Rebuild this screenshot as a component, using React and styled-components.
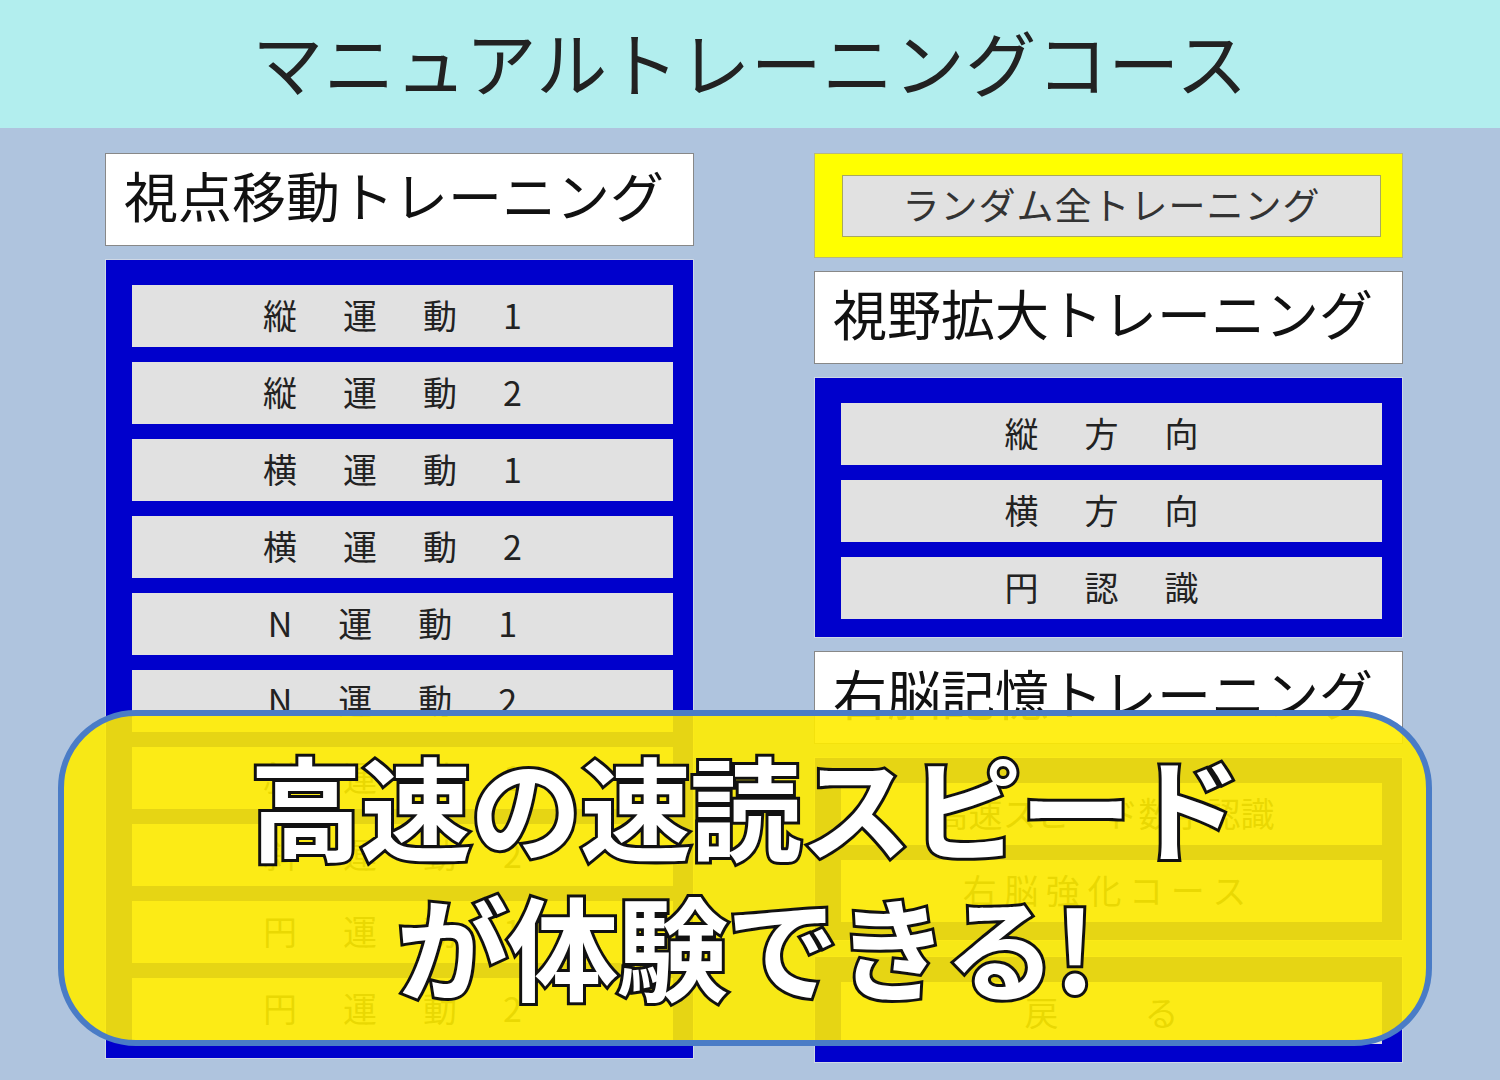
import React from 'react';
import styled, { createGlobalStyle } from 'styled-components';

const GlobalStyle = createGlobalStyle`
  html, body {
    margin: 0;
    padding: 0;
  }
  body {
    font-family: "Noto Sans CJK JP", "Noto Sans", sans-serif;
    background: #afc4de;
  }
`;

const moveItems = [
  '縦　運　動　1',
  '縦　運　動　2',
  '横　運　動　1',
  '横　運　動　2',
  'N　運　動　1',
  'N　運　動　2',
  '斜　運　動　1',
  '斜　運　動　2',
  '円　運　動　1',
  '円　運　動　2',
];

const viewItems = ['縦　方　向', '横　方　向', '円　認　識'];

function App() {
  return (
    <Page>
      <GlobalStyle />
      <TopBar>
        <PageTitle>マニュアルトレーニングコース</PageTitle>
      </TopBar>
      <Columns>
        <Column>
          <SectionTitle>視点移動トレーニング</SectionTitle>
          <BluePanel>
            {moveItems.map((t) => (
              <MenuButton key={t}>{t}</MenuButton>
            ))}
          </BluePanel>
        </Column>
        <Column>
          <RandomBox>
            <RandomButton>ランダム全トレーニング</RandomButton>
          </RandomBox>
          <SectionTitle>視野拡大トレーニング</SectionTitle>
          <BluePanel>
            {viewItems.map((t) => (
              <MenuButton key={t}>{t}</MenuButton>
            ))}
          </BluePanel>
          <SectionTitle>右脳記憶トレーニング</SectionTitle>
          <BluePanel>
            <MenuButton spacing="0px">高速スピード数字認識</MenuButton>
            <MenuButton spacing="0px">右 脳 強 化 コ ー ス</MenuButton>
          </BluePanel>
          <BluePanel>
            <MenuButton>戻　　る</MenuButton>
          </BluePanel>
        </Column>
      </Columns>
      <Banner>
        <BannerLine>高速の速読スピード</BannerLine>
        <BannerLine>が体験できる!</BannerLine>
      </Banner>
    </Page>
  );
}

const Page = styled.div`
  position: relative;
  width: 1500px;
  height: 1080px;
  overflow: hidden;
  background: #afc4de;
`;

const TopBar = styled.div`
  height: 128px;
  background: #b2eeee;
  display: flex;
  align-items: center;
  justify-content: center;
`;

const PageTitle = styled.div`
  font-size: 71px;
  color: #222;
  letter-spacing: 0.5px;
  line-height: 1;
  padding-bottom: 8px;
`;

const Columns = styled.div`
  display: flex;
  gap: 120px;
  padding: 25px 0 0 105px;
`;

const Column = styled.div`
  width: 589px;
  display: flex;
  flex-direction: column;
  gap: 13px;
`;

const SectionTitle = styled.div`
  box-sizing: border-box;
  height: 93px;
  background: #fff;
  border: 1px solid #888;
  display: flex;
  align-items: center;
  padding: 0 0 10px 18px;
  font-size: 54px;
  color: #111;
  white-space: nowrap;
`;

const BluePanel = styled.div`
  box-sizing: border-box;
  background: #0000cc;
  border: 1px solid #cfd8e6;
  padding: 25px 20px 18px 26px;
  display: flex;
  flex-direction: column;
  gap: 15px;
  & + & {
    margin-top: 2px;
  }
`;

const MenuButton = styled.div`
  box-sizing: border-box;
  height: 62px;
  background: #e1e1e1;
  display: flex;
  align-items: center;
  justify-content: center;
  padding: 0 14px 3px 0;
  font-size: 34px;
  color: #222;
  letter-spacing: ${(p) => p.spacing || '6px'};
  white-space: pre;
`;

const RandomBox = styled.div`
  box-sizing: border-box;
  height: 105px;
  background: #ffff00;
  border: 1px solid #b8b880;
  padding: 21px 21px 0 27px;
`;

const RandomButton = styled.div`
  box-sizing: border-box;
  height: 62px;
  background: #e1e1e1;
  border: 1px solid #a8a860;
  display: flex;
  align-items: center;
  justify-content: center;
  padding-bottom: 4px;
  font-size: 37px;
  color: #333;
  letter-spacing: 1px;
`;

const Banner = styled.div`
  position: absolute;
  left: 58px;
  top: 710px;
  width: 1374px;
  height: 336px;
  box-sizing: border-box;
  border: 6px solid #4a7cc6;
  border-radius: 78px;
  background: rgba(255, 236, 0, 0.9);
  display: flex;
  flex-direction: column;
  align-items: center;
  justify-content: center;
  padding-bottom: 8px;
`;

const BannerLine = styled.div`
  font-size: 112px;
  font-weight: 700;
  line-height: 140px;
  color: #fff;
  -webkit-text-stroke: 6px #111;
  paint-order: stroke fill;
  letter-spacing: -2px;
  white-space: nowrap;
`;

export default App;
